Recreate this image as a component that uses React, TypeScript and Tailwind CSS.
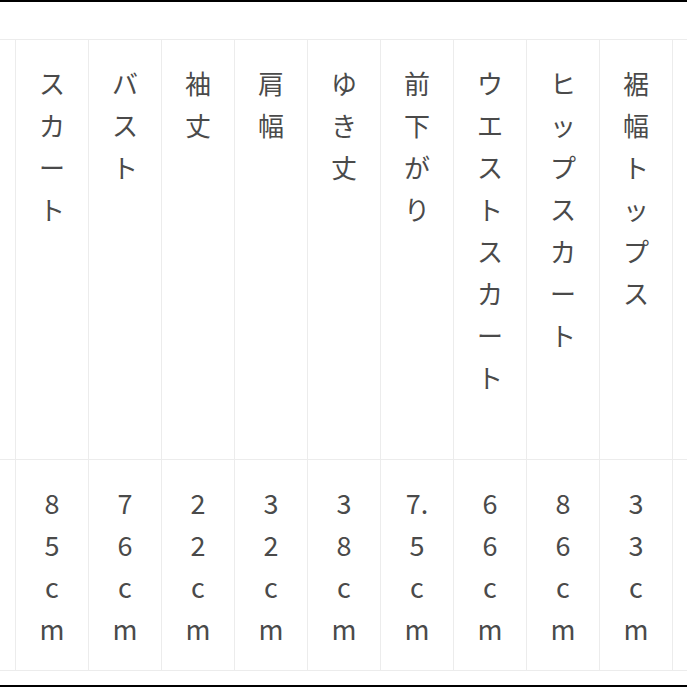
import React from "react";

type Col = { head: string[]; value: string[] };

const cols: Col[] = [
  { head: [], value: [] },
  { head: ["ス", "カ", "ー", "ト"], value: ["8", "5", "c", "m"] },
  { head: ["バ", "ス", "ト"], value: ["7", "6", "c", "m"] },
  { head: ["袖", "丈"], value: ["2", "2", "c", "m"] },
  { head: ["肩", "幅"], value: ["3", "2", "c", "m"] },
  { head: ["ゆ", "き", "丈"], value: ["3", "8", "c", "m"] },
  { head: ["前", "下", "が", "り"], value: ["7.", "5", "c", "m"] },
  { head: ["ウ", "エ", "ス", "ト", "ス", "カ", "ー", "ト"], value: ["6", "6", "c", "m"] },
  { head: ["ヒ", "ッ", "プ", "ス", "カ", "ー", "ト"], value: ["8", "6", "c", "m"] },
  { head: ["裾", "幅", "ト", "ッ", "プ", "ス"], value: ["3", "3", "c", "m"] },
  { head: [], value: [] },
];

function Cell({ lines, className }: { lines: string[]; className: string }) {
  return (
    <div
      className={`flex w-[73px] shrink-0 flex-col items-center border-r border-[#ececec] leading-[42px] text-[#4a4a4a] ${className}`}
    >
      {lines.map((l, i) => (
        <span key={i}>{l}</span>
      ))}
    </div>
  );
}

export default function App() {
  return (
    <div
      className="flex h-[687px] w-[687px] flex-col overflow-hidden bg-white"
      style={{ fontFamily: '"Noto Sans CJK JP", "Noto Sans", sans-serif' }}
    >
      <div className="h-[2px] bg-black" />
      <div className="h-[37px]" />
      <div className="border-t border-[#ececec]">
        <div className="-ml-[57px] flex">
          {cols.map((c, i) => (
            <Cell key={i} lines={c.head} className="h-[419px] pt-[22px] text-[26px]" />
          ))}
        </div>
      </div>
      <div className="border-y border-[#ececec]">
        <div className="-ml-[57px] flex">
          {cols.map((c, i) => (
            <Cell key={i} lines={c.value} className="h-[210px] pt-[22px] text-[27px]" />
          ))}
        </div>
      </div>
      <div className="flex-1" />
      <div className="h-[2px] bg-black" />
    </div>
  );
}
